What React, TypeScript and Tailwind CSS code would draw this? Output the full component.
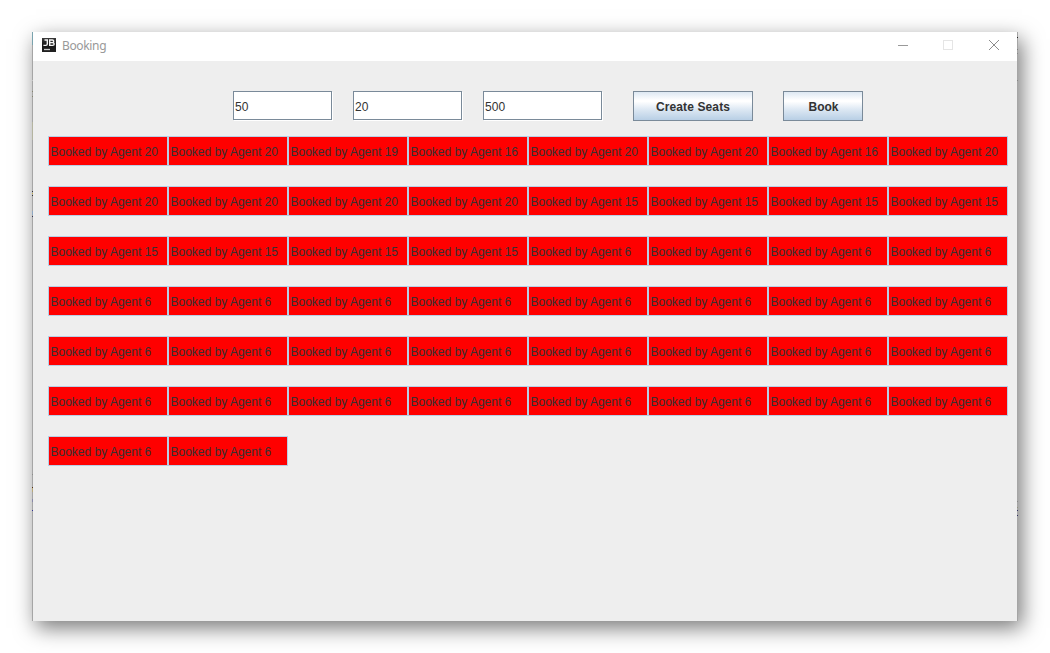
const bookings: number[] = [
  20, 20, 19, 16, 20, 20, 16, 20,
  20, 20, 20, 20, 15, 15, 15, 15,
  15, 15, 15, 15,
  ...Array<number>(30).fill(6),
];

// Slivers of the desktop that show beside the window frame.
const leftSlivers = [
  'top-0 h-[13px] bg-[#7aa3ae]',
  'top-[48px] h-px bg-[#c4c4c4]',
  'top-[59px] h-px bg-[#85836f]',
  'top-[64px] h-px bg-[#85836f]',
  'top-[90px] h-[18px] bg-[#b4b4a0]',
  'top-[159px] h-px bg-[#303030]',
  'top-[161px] h-px bg-[#c4b050]',
  'top-[163px] h-px bg-[#303030]',
  'top-[179px] h-[4px] bg-[#8fa8c2]',
  'top-[184px] h-px bg-[#303050]',
  'top-[442px] h-px bg-[#8c8c8c]',
  'top-[455px] h-px bg-[#503018]',
  'top-[456px] h-[4px] bg-[#b8a878]',
  'top-[467px] h-[3px] bg-[#8888a8]',
  'top-[478px] h-px bg-[#303090]',
];
const rightSlivers = [
  'top-[5px] h-px bg-[#202020]',
  'top-[17px] h-px bg-[#808080]',
  'top-[21px] h-px bg-[#888888]',
  'top-[48px] h-px bg-[#858585]',
  'top-[469px] h-px bg-[#888888]',
  'top-[475px] h-px bg-[#92927f]',
  'top-[478px] h-px bg-[#303060]',
  'top-[483px] h-px bg-[#303060]',
];

function Field({ value, className }: { value: string; className: string }) {
  return (
    <div className={`relative h-[30px] border-r border-b border-white ${className}`}>
      <input
        defaultValue={value}
        className="block h-[29px] w-full border border-[#7a8a99] bg-white pt-[2px] pl-px text-[12px] tracking-[0.1px] text-[#333333] outline-none"
      />
      <span className="absolute -right-px top-0 size-px bg-[#eeeeee]" />
      <span className="absolute -bottom-px left-0 size-px bg-[#eeeeee]" />
    </div>
  );
}

function MetalButton({ label, className }: { label: string; className: string }) {
  return (
    <button
      className={`h-[30px] border border-[#7a8a99] bg-[linear-gradient(to_bottom,#dde8f3_0%,#ffffff_30%,#ffffff_34%,#dde8f3_62%,#b8cfe5_100%)] pt-px text-[12px] font-bold text-[#333333] ${className}`}
    >
      {label}
    </button>
  );
}

function TitleBar() {
  return (
    <header className="flex h-[29px] items-center bg-white pl-[9px]">
      <svg width="14" height="14" viewBox="0 0 14 14" className="-mt-[3px]">
        <defs>
          <linearGradient id="tile" x1="0" y1="0" x2="0" y2="1">
            <stop offset="0" stopColor="#3a3a3a" />
            <stop offset="0.5" stopColor="#161616" />
            <stop offset="1" stopColor="#222222" />
          </linearGradient>
        </defs>
        <rect width="14" height="14" fill="url(#tile)" />
        <path
          d="M2.5 2H5.3V6Q5.3 7.4 3.8 7.4H1.4M7.7 1.3V8.1M7.7 2H10.4Q11.7 2 11.7 3.3 11.7 4.6 10.4 4.6H7.7M10.4 4.6Q12.2 4.7 12.2 6 12.2 7.4 10.6 7.4H7.7"
          fill="none"
          stroke="#f4f4f4"
          strokeWidth="1.4"
        />
        <path d="M2 11.5h6" stroke="#c8c8c8" strokeWidth="1.3" />
      </svg>
      <span className="-mt-px ml-[6px] font-['Noto_Sans','Open_Sans',sans-serif] text-[12px] tracking-[-0.35px] text-[#999999]">
        Booking
      </span>
      <div className="ml-auto flex h-full">
        <svg width="46" height="29" shapeRendering="crispEdges">
          <path d="M18 13.5h10" stroke="#999" />
        </svg>
        <svg width="46" height="29" shapeRendering="crispEdges">
          <rect x="17.5" y="8.5" width="9" height="9" fill="none" stroke="#e5e5e5" />
        </svg>
        <svg width="45" height="29">
          <path d="M17 8l10 10M27 8L17 18" stroke="#8c8c8c" strokeWidth="1" />
        </svg>
      </div>
    </header>
  );
}

export default function App() {
  return (
    <div className="h-[653px] w-[1050px] overflow-hidden bg-white pt-[32px] pl-[32px] font-['Liberation_Sans',Arial,sans-serif] text-[12px] text-[#333333]">
      <div className="relative h-[589px] w-[986px] border-x border-[#a5a5a5] shadow-[4px_7px_20px_0px_rgba(0,0,0,0.53)]">
        {leftSlivers.map((s) => (
          <span key={s} className={`absolute -left-px w-px ${s}`} />
        ))}
        {rightSlivers.map((s) => (
          <span key={s} className={`absolute -right-px w-px ${s}`} />
        ))}
        <TitleBar />
        <main className="h-[560px] bg-[#eeeeee] pt-[30px] pl-[15px]">
          <div className="ml-[185px] flex">
            <Field value="50" className="mr-[20px] w-[100px]" />
            <Field value="20" className="mr-[20px] w-[110px]" />
            <Field value="500" className="mr-[30px] w-[120px]" />
            <MetalButton label="Create Seats" className="mr-[30px] w-[120px] tracking-[0.12px]" />
            <MetalButton label="Book" className="w-[80px] pl-px" />
          </div>
          <div className="mt-[15px] grid w-[960px] grid-cols-8 gap-y-[20px]">
            {bookings.map((agent, i) => (
              <div
                key={i}
                className="flex h-[30px] items-center border border-[#b8cfe5] bg-[#ff0000] pt-px pl-[1.5px] whitespace-nowrap"
              >
                Booked by Agent {agent}
              </div>
            ))}
          </div>
        </main>
      </div>
    </div>
  );
}
